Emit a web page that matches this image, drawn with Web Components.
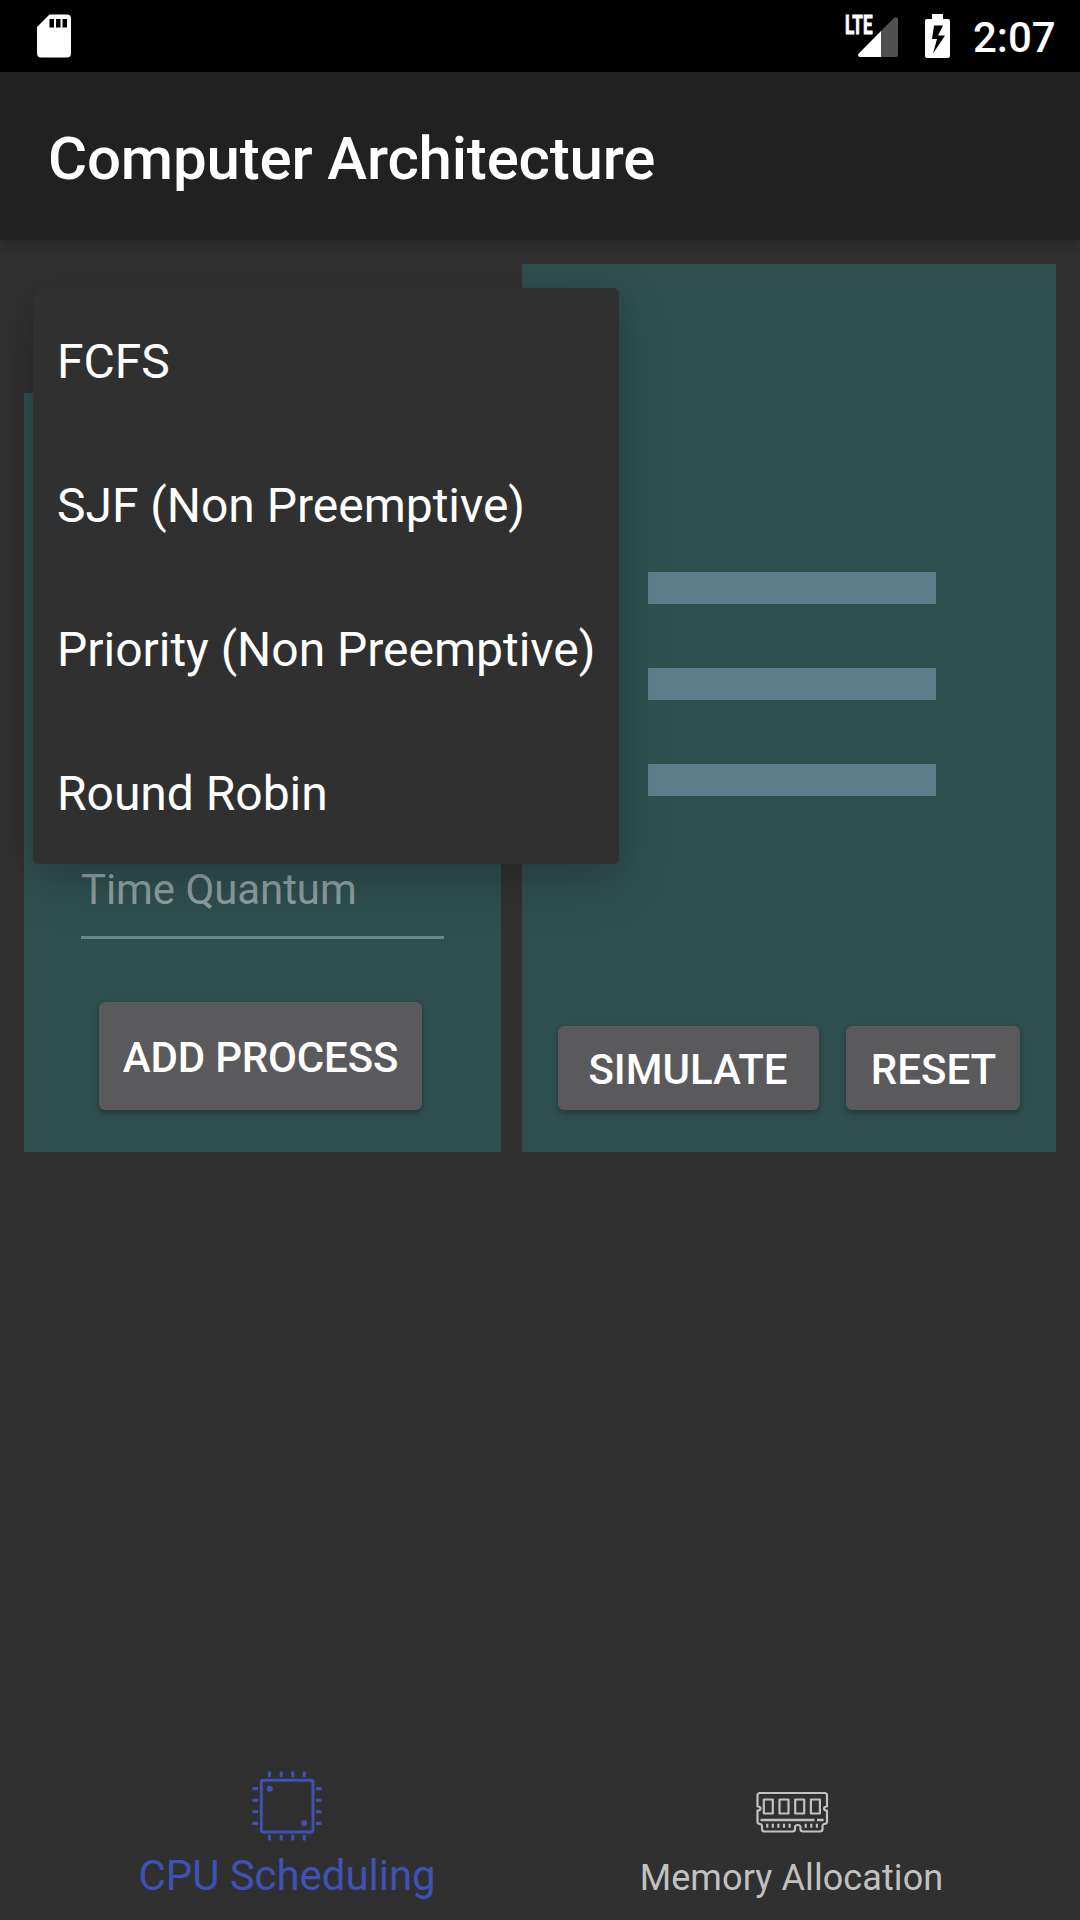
<!DOCTYPE html>
<html lang="en">
<head>
<meta charset="utf-8">
<title>Computer Architecture</title>
<style>
html, body { margin: 0; }
body { width: 1080px; height: 1920px; overflow: hidden; background: #303030; color: #fff; font-family: Roboto, "Noto Sans", sans-serif; }
</style>
</head>
<body>
<cpu-app></cpu-app>
<script>
const define = (name, html) => {
  const template = document.createElement('template');
  template.innerHTML = html;
  customElements.define(name, class extends HTMLElement {
    constructor() {
      super();
      this.attachShadow({ mode: 'open' }).append(template.content.cloneNode(true));
    }
  });
};

define('status-bar', `
<style>
:host { display: flex; align-items: flex-start; justify-content: space-between; height: 72px; background: #000; box-sizing: border-box; }
svg { display: block; }
.right { display: flex; height: 72px; }
.time { font-size: 42px; font-weight: 500; line-height: 72px; height: 72px; margin-top: 2px; width: 107px; white-space: nowrap; }
</style>
<svg width="90" height="72" viewBox="0 0 90 72">
  <path fill="#fff" d="M49.500 14.500H67q4 0 4 4V53q0 4.500-4 4.500H41q-4 0-4-4.500V27z"/>
  <path d="M49.500 19h4.500v8.500h-4.500zM56 19h4.500v8.500H56zM62.500 19H67v8.500h-4.500z"/>
</svg>
<div class="right">
  <svg width="137" height="72" viewBox="836 0 137 72">
    <text x="845" y="33.500" fill="#fff" stroke="#fff" stroke-width=".9" font-family="Roboto" font-size="26" font-weight="700" textLength="27.500" lengthAdjust="spacingAndGlyphs">LTE</text>
    <path fill="#fff" d="M881 31v26h-21q-2.500-.5-1.700-3z"/>
    <path fill="#505050" d="M881 31l13.300-13.300q3-1.500 3.700 1.300v36q0 2-2 2h-15z"/>
    <path fill="#fff" fill-rule="evenodd" d="M932 14h11v5h5q2 0 2 2v35q0 2-2 2h-21q-2 0-2-2V21q0-2 2-2h5zM934 25.500l-2 13.500h5l-4 14.500 12-18h-7l5-10z"/>
  </svg>
  <div class="time">2:07</div>
</div>`);

define('app-bar', `
<style>
:host { display: flex; align-items: center; height: 168px; padding: 5px 48px 0; box-sizing: border-box; background: #212121; font-size: 60px; font-weight: 500; line-height: 72px; letter-spacing: -.17px; box-shadow: 0 5px 12px rgba(0,0,0,.24); position: relative; white-space: nowrap; }
</style><slot></slot>`);

define('raised-button', `
<style>
:host { display: flex; align-items: center; justify-content: center; box-sizing: border-box; height: 84px; padding-top: 3px; border-radius: 6px; background: #5a595b; font-size: 42px; font-weight: 500; line-height: 50px; white-space: nowrap; box-shadow: 0 4px 6px rgba(0,0,0,.22), 0 0 4px rgba(0,0,0,.12); }
</style><slot></slot>`);

define('text-entry', `
<style>
:host { display: block; box-sizing: border-box; width: 363px; height: 75px; padding-top: 1px; border-bottom: 3px solid #6e8485; color: #8d9f9f; font-size: 42px; line-height: 50px; letter-spacing: -.08px; white-space: nowrap; }
</style><slot></slot>`);

define('content-panel', `
<style>
:host { display: flex; flex-direction: column; align-items: center; box-sizing: border-box; background: #2f4f4f; }
</style><slot></slot>`);

define('option-item', `
<style>
:host { display: flex; align-items: center; height: 144px; padding: 3px 24px 0; box-sizing: border-box; font-size: 48px; line-height: 56px; letter-spacing: -.02px; white-space: nowrap; }
</style><slot></slot>`);

define('option-menu', `
<style>
:host { display: block; width: 586px; height: 576px; border-radius: 6px; background: #303030; box-shadow: 0 18px 52px rgba(0,0,0,.2), 0 0 24px rgba(0,0,0,.06); }
</style><slot></slot>`);

define('nav-item', `
<style>
:host { display: flex; flex-direction: column; align-items: center; justify-content: flex-end; box-sizing: border-box; white-space: nowrap; }
</style><slot name="icon"></slot><slot></slot>`);

define('bottom-nav', `
<style>
:host { display: flex; height: 168px; background: #303030; box-shadow: 0 -1px 3px rgba(0,0,0,.04); padding: 0 36px; box-sizing: border-box; }
svg { display: block; }
nav-item { flex: 1; height: 168px; }
.cpu { flex: 0 0 502px; color: #3f51b5; font-size: 42px; line-height: 50px; letter-spacing: -.05px; padding-bottom: 19px; }
.cpu svg { margin-bottom: 9px; }
.mem { color: #c1c1c1; font-size: 36px; line-height: 42px; letter-spacing: .1px; padding-left: 1px; padding-bottom: 21px; }
.mem svg { margin-bottom: 24px; }
</style>
<nav-item class="cpu">
  <svg slot="icon" width="72" height="72" viewBox="251 1770 72 72" fill="none" stroke="currentColor">
    <rect x="261.300" y="1780.300" width="51.700" height="51.700" rx="2" stroke-width="2.900"/>
    <path stroke-width="3.100" d="M269.500 1771.500v5.500M281.200 1771.500v5.500M292.700 1771.500v5.500M304.300 1771.500v5.500M269.500 1835v5.500M281.200 1835v5.500M292.700 1835v5.500M304.300 1835v5.500M252.500 1788.600h5.500M252.500 1800.300h5.500M252.500 1811.700h5.500M252.500 1823.400h5.500M316 1788.600h5.500M316 1800.300h5.500M316 1811.700h5.500M316 1823.400h5.500"/>
    <circle cx="269.800" cy="1788.800" r="3" fill="currentColor" stroke="none"/>
    <circle cx="304.200" cy="1823.200" r="3" fill="currentColor" stroke="none"/>
  </svg>CPU Scheduling</nav-item>
<nav-item class="mem">
  <svg slot="icon" width="74" height="42" viewBox="755 1791 74 42" fill="none" stroke="currentColor" stroke-width="2.200" stroke-linejoin="round">
    <path d="M759.500 1793h65q2.500 0 2.500 2.500v11q-3 0-3 2t3 2v11q0 2.500-2.500 2.500-2 0-2 2.500v2.500q0 2.500-2.500 2.500h-17q-2.500 0-2.500-2.500v-1.500q0-2.500-2.500-2.500h-.5q-2.500 0-2.500 2.500v1.500q0 2.500-2.500 2.500h-28q-2.500 0-2.500-2.500v-2.500q0-2.500-2-2.500-2.500 0-2.500-2.500v-11q3 0 3-2t-3-2v-11q0-2.500 2.500-2.500z"/>
    <path d="M763.800 1799.500h9v14h-9zM779.500 1799.500h9v14h-9zM795.200 1799.500h9v14h-9zM810.900 1799.500h9v14h-9z"/>
    <path d="M760.500 1820h54M817 1820h6.500" stroke-width="2.400"/>
    <path d="M767.300 1823.800v4M772.800 1823.800v4M778.400 1823.800v4M784 1823.800v4M789.600 1823.800v4M805.700 1823.800v4M811.300 1823.800v4M816.900 1823.800v4"/>
  </svg>Memory Allocation</nav-item>`);

define('cpu-app', `
<style>
:host { display: flex; flex-direction: column; width: 1080px; height: 1920px; background: #303030; }
main { position: relative; flex: 1; display: flex; align-items: flex-start; gap: 21px; padding: 24px 24px 0; }
.left { width: 477px; height: 759px; margin-top: 129px; padding-top: 471px; }
.left raised-button { width: 323px; height: 108px; margin-top: 63px; margin-right: 4px; letter-spacing: -.18px; }
.right { width: 534px; height: 888px; padding-top: 308px; }
.bars { display: flex; flex-direction: column; gap: 64px; width: 288px; margin-left: 6px; }
.bars i { display: block; height: 32px; background: #607d8b; }
.actions { display: flex; gap: 27px; margin-top: 230px; }
.simulate { width: 261px; padding-right: 1px; }
.reset { width: 174px; padding-left: 1px; }
option-menu { position: absolute; left: 33px; top: 48px; }
</style>
<status-bar></status-bar>
<app-bar>Computer Architecture</app-bar>
<main>
  <content-panel class="left">
    <text-entry>Time Quantum</text-entry>
    <raised-button>ADD PROCESS</raised-button>
  </content-panel>
  <content-panel class="right">
    <div class="bars"><i></i><i></i><i></i></div>
    <div class="actions">
      <raised-button class="simulate">SIMULATE</raised-button>
      <raised-button class="reset">RESET</raised-button>
    </div>
  </content-panel>
  <option-menu>
    <option-item>FCFS</option-item>
    <option-item>SJF (Non Preemptive)</option-item>
    <option-item>Priority (Non Preemptive)</option-item>
    <option-item>Round Robin</option-item>
  </option-menu>
</main>
<bottom-nav></bottom-nav>`);
</script>
</body>
</html>
